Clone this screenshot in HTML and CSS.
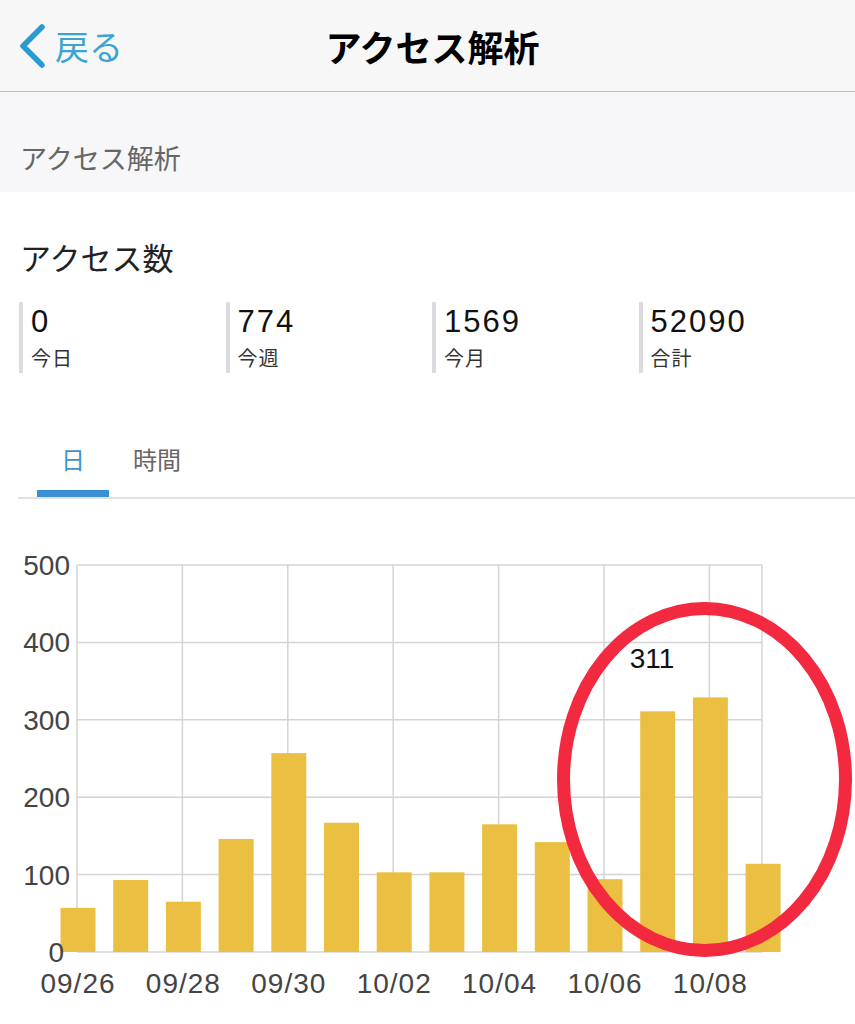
FILE: index.html
```html
<!DOCTYPE html>
<html lang="ja">
<head>
<meta charset="utf-8">
<title>アクセス解析</title>
<link rel="stylesheet" href="styles.css">
</head>
<body>
<header class="navbar">
  <a class="back">
    <svg class="chev" width="30" height="46" viewBox="0 0 30 46"><path d="M25 4 L6 23 L25 42" fill="none" stroke="#2a9ad0" stroke-width="5.5" stroke-linecap="round" stroke-linejoin="round"/></svg>
    <span class="back-text">戻る</span>
  </a>
  <h1 class="nav-title">アクセス解析</h1>
  <span class="nav-spacer"></span>
</header>
<div class="section-head">アクセス解析</div>
<main class="content">
  <h2 class="block-title">アクセス数</h2>
  <div class="stats">
    <div class="stat"><div class="stat-num">0</div><div class="stat-label">今日</div></div>
    <div class="stat"><div class="stat-num">774</div><div class="stat-label">今週</div></div>
    <div class="stat"><div class="stat-num">1569</div><div class="stat-label">今月</div></div>
    <div class="stat"><div class="stat-num">52090</div><div class="stat-label">合計</div></div>
  </div>
  <div class="tabs">
    <div class="tab active">日</div>
    <div class="tab">時間</div>
  </div>
  <svg class="chart" width="855" height="525" viewBox="0 499 855 525">
    <g class="grid" stroke="#d4d4d4" stroke-width="1.5">
      <line x1="77" y1="565" x2="762" y2="565"/>
      <line x1="77" y1="642.4" x2="762" y2="642.4"/>
      <line x1="77" y1="719.8" x2="762" y2="719.8"/>
      <line x1="77" y1="797.2" x2="762" y2="797.2"/>
      <line x1="77" y1="874.6" x2="762" y2="874.6"/>
      <line x1="77" y1="952" x2="762" y2="952"/>
      <line x1="77" y1="565" x2="77" y2="952"/>
      <line x1="182.4" y1="565" x2="182.4" y2="952"/>
      <line x1="287.8" y1="565" x2="287.8" y2="952"/>
      <line x1="393.2" y1="565" x2="393.2" y2="952"/>
      <line x1="498.6" y1="565" x2="498.6" y2="952"/>
      <line x1="604" y1="565" x2="604" y2="952"/>
      <line x1="709.4" y1="565" x2="709.4" y2="952"/>
      <line x1="762" y1="565" x2="762" y2="952"/>
    </g>
    <g class="bars" fill="#ebc042">
      <rect x="60.5" y="907.9" width="35" height="44.1"/>
      <rect x="113.2" y="880.0" width="35" height="72.0"/>
      <rect x="165.9" y="901.7" width="35" height="50.3"/>
      <rect x="218.6" y="839.0" width="35" height="113.0"/>
      <rect x="271.3" y="753.1" width="35" height="198.9"/>
      <rect x="324.0" y="822.7" width="35" height="129.3"/>
      <rect x="376.7" y="872.3" width="35" height="79.7"/>
      <rect x="429.4" y="872.3" width="35" height="79.7"/>
      <rect x="482.1" y="824.3" width="35" height="127.7"/>
      <rect x="534.8" y="842.1" width="35" height="109.9"/>
      <rect x="587.5" y="879.2" width="35" height="72.8"/>
      <rect x="640.2" y="711.3" width="35" height="240.7"/>
      <rect x="692.9" y="697.4" width="35" height="254.6"/>
      <rect x="745.6" y="863.8" width="35" height="88.2"/>
    </g>
    <g class="ylabels">
      <text x="70" y="575">500</text>
      <text x="70" y="652.4">400</text>
      <text x="70" y="729.8">300</text>
      <text x="70" y="807.2">200</text>
      <text x="70" y="884.6">100</text>
      <text x="64" y="962">0</text>
    </g>
    <g class="xlabels">
      <text x="78" y="993">09/26</text>
      <text x="183.4" y="993">09/28</text>
      <text x="288.8" y="993">09/30</text>
      <text x="394.2" y="993">10/02</text>
      <text x="499.6" y="993">10/04</text>
      <text x="605" y="993">10/06</text>
      <text x="710.4" y="993">10/08</text>
    </g>
    <text class="val" x="652" y="668">311</text>
    <ellipse cx="704.5" cy="779.5" rx="141" ry="171" fill="none" stroke="#f2293f" stroke-width="13"/>
  </svg>
</main>
</body>
</html>
```
FILE: styles.css
```css
html, body {
  margin: 0;
  padding: 0;
  background: #ffffff;
}
body {
  width: 855px;
  height: 1024px;
  overflow: hidden;
  font-family: "Liberation Sans", "Noto Sans CJK JP", sans-serif;
  color: #222;
}
.navbar {
  height: 91px;
  background: #f7f7f8;
  border-bottom: 1px solid #bdbdc1;
  display: grid;
  grid-template-columns: 1fr auto 1fr;
  align-items: center;
}
.back {
  display: flex;
  align-items: center;
  padding-left: 17px;
  gap: 8px;
}
.chev {
  display: block;
  margin-top: 1px;
}
.back-text {
  font-family: "Noto Sans CJK JP", sans-serif;
  font-size: 34px;
  line-height: 40px;
  color: #3da3cf;
}
.nav-title {
  margin: 0;
  font-family: "Noto Sans CJK JP", sans-serif;
  font-size: 36px;
  font-weight: 700;
  line-height: 44px;
  color: #000;
  padding-left: 10px;
}
.section-head {
  height: 100px;
  box-sizing: border-box;
  padding: 50px 0 0 20px;
  background: #f7f7f9;
  font-family: "Noto Sans CJK JP", sans-serif;
  font-size: 27px;
  line-height: 32px;
  color: #666;
}
.content {
  display: block;
}
.block-title {
  margin: 0;
  padding: 48px 0 0 20px;
  font-family: "Noto Sans CJK JP", sans-serif;
  font-weight: 400;
  font-size: 31px;
  line-height: 34px;
  color: #222;
}
.stats {
  display: grid;
  grid-template-columns: repeat(4, 206.5px);
  padding-left: 19px;
  margin-top: 28px;
}
.stat {
  border-left: 4px solid #dcdcdc;
  padding-left: 8px;
  height: 71px;
  box-sizing: border-box;
}
.stat-num {
  font-size: 31px;
  line-height: 40px;
  letter-spacing: 2px;
  color: #111;
}
.stat-label {
  font-family: "Noto Sans CJK JP", sans-serif;
  font-size: 20px;
  line-height: 31px;
  letter-spacing: 1px;
  color: #333;
}
.tabs {
  display: flex;
  margin-left: 18px;
  padding-left: 19px;
  margin-top: 69px;
  border-bottom: 2px solid #e1e1e3;
}
.tab {
  font-family: "Noto Sans CJK JP", sans-serif;
  font-size: 24px;
  line-height: 34px;
  padding: 0 24px 14px;
  border-bottom: 7px solid transparent;
  color: #666;
}
.tab.active {
  color: #3a95cf;
  border-bottom-color: #3a8fd5;
}
.chart {
  display: block;
}
.ylabels text {
  font-family: "Liberation Sans", sans-serif;
  font-size: 28px;
  fill: #444;
  text-anchor: end;
}
.xlabels text {
  font-family: "Liberation Sans", sans-serif;
  font-size: 28px;
  fill: #444;
  text-anchor: middle;
  letter-spacing: 1px;
}
.val {
  font-family: "Liberation Sans", sans-serif;
  font-size: 28px;
  fill: #111;
  text-anchor: middle;
}
```
